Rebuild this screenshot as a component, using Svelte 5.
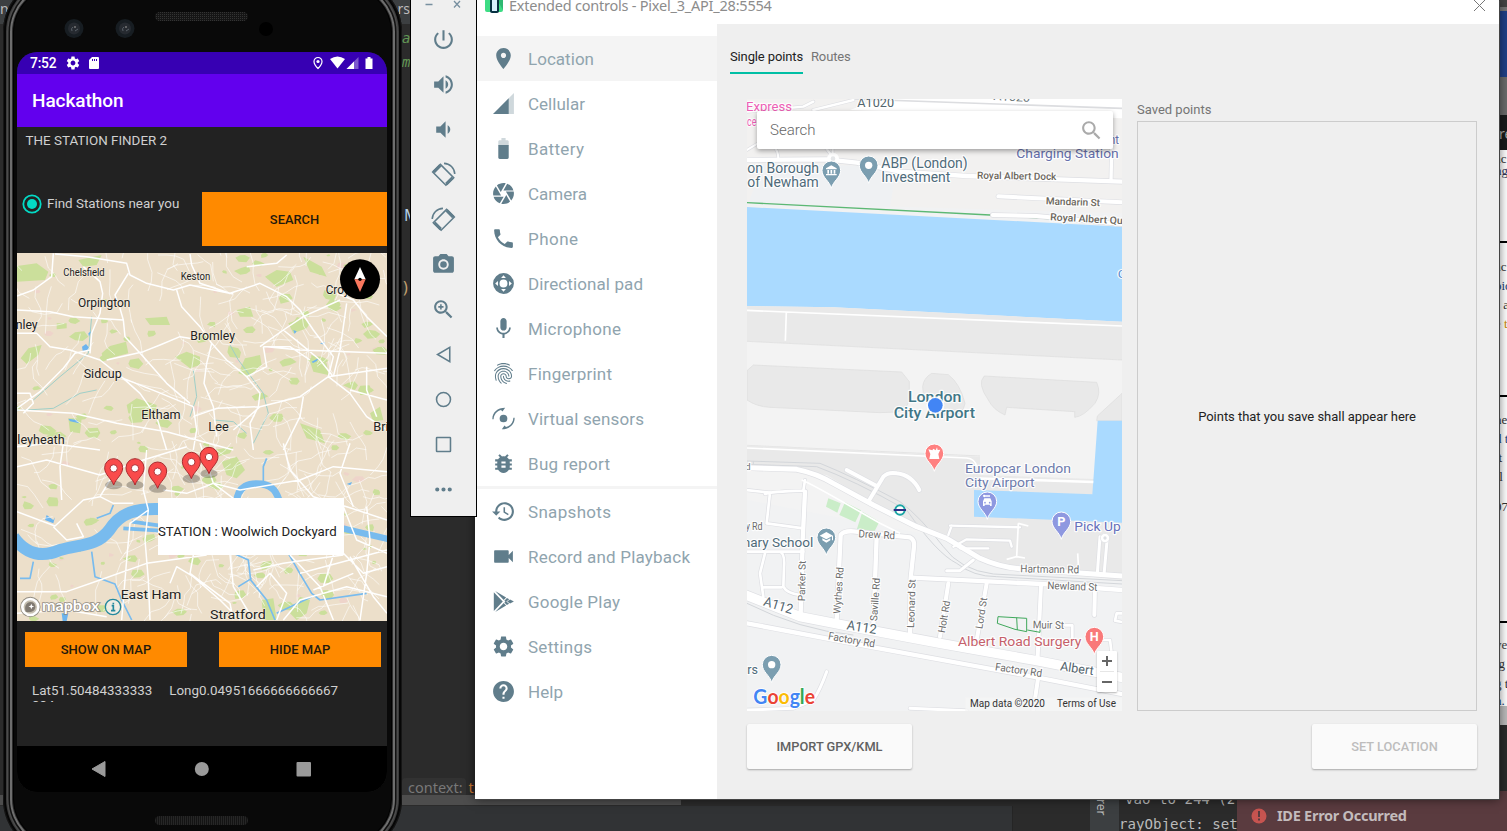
<script>
  const P = {
    pin: 'M12 2C8.13 2 5 5.13 5 9c0 5.25 7 13 7 13s7-7.75 7-13c0-3.87-3.13-7-7-7zm0 9.5c-1.38 0-2.5-1.12-2.5-2.5s1.12-2.5 2.5-2.5 2.5 1.12 2.5 2.5-1.12 2.5-2.5 2.5z',
    gear: 'M19.14 12.94c.04-.3.06-.61.06-.94 0-.32-.02-.64-.07-.94l2.03-1.58c.18-.14.23-.41.12-.61l-1.92-3.32c-.12-.22-.37-.29-.59-.22l-2.39.96c-.5-.38-1.03-.7-1.62-.94l-.36-2.54c-.04-.24-.24-.41-.48-.41h-3.84c-.24 0-.43.17-.47.41l-.36 2.54c-.59.24-1.13.57-1.62.94l-2.39-.96c-.22-.08-.47 0-.59.22L2.74 8.87c-.12.21-.08.47.12.61l2.03 1.58c-.05.3-.09.63-.09.94s.02.64.07.94l-2.03 1.58c-.18.14-.23.41-.12.61l1.92 3.32c.12.22.37.29.59.22l2.39-.96c.5.38 1.03.7 1.62.94l.36 2.54c.05.24.24.41.48.41h3.84c.24 0 .44-.17.47-.41l.36-2.54c.59-.24 1.13-.56 1.62-.94l2.39.96c.22.08.47 0 .59-.22l1.92-3.32c.12-.22.07-.47-.12-.61l-2.01-1.58zM12 15.6c-1.98 0-3.6-1.62-3.6-3.6s1.62-3.6 3.6-3.6 3.6 1.62 3.6 3.6-1.62 3.6-3.6 3.6z',
    search: 'M15.5 14h-.79l-.28-.27C15.41 12.59 16 11.11 16 9.5 16 5.91 13.09 3 9.5 3S3 5.91 3 9.5 5.91 16 9.5 16c1.61 0 3.09-.59 4.23-1.57l.27.28v.79l5 4.99L20.49 19l-4.99-5zm-6 0C7.01 14 5 11.99 5 9.5S7.01 5 9.5 5 14 7.01 14 9.5 11.99 14 9.5 14z'
  };

  const menu = [
    { label: 'Location', w: 66, paths: [[P.pin]] },
    { label: 'Cellular', w: 57, paths: [['M2 22h20V2z', 0.3], ['M17 7L2 22h15z']] },
    { label: 'Battery', w: 56, paths: [['M17 5.33C17 4.6 16.4 4 15.67 4H14V2h-4v2H8.33C7.6 4 7 4.6 7 5.33V9h10V5.33z', 0.3], ['M7 8.6v12.07C7 21.4 7.6 22 8.33 22h7.33c.74 0 1.34-.6 1.34-1.33V8.6H7z']] },
    { label: 'Camera', w: 59, paths: [['M9.4 10.5l4.77-8.26C13.47 2.09 12.75 2 12 2c-2.4 0-4.6.85-6.32 2.25l3.66 6.35.06-.1zM21.54 9c-.92-2.92-3.15-5.26-6-6.34L11.88 9h9.66zm.26 1h-7.49l.29.5 4.76 8.25C21 16.97 22 14.61 22 12c0-.69-.07-1.35-.2-2zM8.54 12l-3.9-6.75C3.01 7.03 2 9.39 2 12c0 .69.07 1.35.2 2h7.49l-1.15-2zm-6.08 3c.92 2.92 3.15 5.26 6 6.34L12.12 15H2.46zm11.27 0l-3.9 6.76c.7.15 1.42.24 2.17.24 2.4 0 4.6-.85 6.32-2.25l-3.66-6.35-.93 1.6z']] },
    { label: 'Phone', w: 50, paths: [['M6.62 10.79c1.44 2.83 3.76 5.14 6.59 6.59l2.2-2.2c.27-.27.67-.36 1.02-.24 1.12.37 2.33.57 3.57.57.55 0 1 .45 1 1V20c0 .55-.45 1-1 1-9.39 0-17-7.61-17-17 0-.55.45-1 1-1h3.5c.55 0 1 .45 1 1 0 1.25.2 2.45.57 3.57.11.35.03.74-.25 1.02l-2.2 2.2z']] },
    { label: 'Directional pad', w: 115, paths: [['M12 2a10 10 0 1 0 0 20 10 10 0 0 0 0-20zm0 6.2a3.8 3.8 0 1 1 0 7.6 3.8 3.8 0 0 1 0-7.6zM12 4l2.3 2.7H9.7zM12 20l-2.3-2.7h4.6zM4 12l2.7-2.3v4.6zM20 12l-2.7 2.3V9.700z']] },
    { label: 'Microphone', w: 93, paths: [['M12 14c1.66 0 2.99-1.34 2.99-3L15 5c0-1.66-1.34-3-3-3S9 3.34 9 5v6c0 1.66 1.34 3 3 3zm5.3-3c0 3-2.54 5.1-5.3 5.1S6.7 14 6.7 11H5c0 3.41 2.72 6.23 6 6.72V21h2v-3.28c3.28-.48 6-3.3 6-6.72h-1.7z']] },
    { label: 'Fingerprint', w: 84, paths: [['M17.81 4.47c-.08 0-.16-.02-.23-.06C15.66 3.42 14 3 12.01 3c-1.98 0-3.86.47-5.57 1.41-.24.13-.54.04-.68-.2-.13-.24-.04-.55.2-.68C7.82 2.52 9.86 2 12.01 2c2.13 0 3.99.47 6.03 1.52.25.13.34.43.21.67-.09.18-.26.28-.44.28zM3.5 9.72c-.1 0-.2-.03-.29-.09-.23-.16-.28-.47-.12-.7.99-1.4 2.25-2.5 3.75-3.27C9.98 4.04 14 4.03 17.15 5.65c1.5.77 2.76 1.86 3.75 3.25.16.22.11.54-.12.7-.23.16-.54.11-.7-.12-.9-1.26-2.04-2.25-3.39-2.94-2.87-1.47-6.54-1.47-9.4.01-1.36.7-2.5 1.7-3.4 2.96-.08.14-.23.21-.39.21zm6.25 12.07c-.13 0-.26-.05-.35-.15-.87-.87-1.34-1.43-2.01-2.64-.69-1.23-1.05-2.73-1.05-4.34 0-2.97 2.54-5.39 5.66-5.39s5.66 2.42 5.66 5.39c0 .28-.22.5-.5.5s-.5-.22-.5-.5c0-2.42-2.09-4.39-4.66-4.39-2.57 0-4.66 1.97-4.66 4.39 0 1.44.32 2.77.93 3.85.64 1.15 1.08 1.64 1.85 2.42.19.2.19.51 0 .71-.11.1-.24.15-.37.15zm7.17-1.85c-1.19 0-2.24-.3-3.1-.89-1.49-1.01-2.38-2.65-2.38-4.39 0-.28.22-.5.5-.5s.5.22.5.5c0 1.41.72 2.74 1.94 3.56.71.48 1.54.71 2.54.71.24 0 .64-.03 1.04-.1.27-.05.53.13.58.41.05.27-.13.53-.41.58-.57.11-1.07.12-1.21.12zM14.91 22c-.04 0-.09-.01-.13-.02-1.59-.44-2.63-1.03-3.72-2.1-1.4-1.39-2.17-3.24-2.17-5.22 0-1.62 1.38-2.94 3.08-2.94 1.7 0 3.08 1.32 3.08 2.94 0 1.07.93 1.94 2.08 1.94s2.08-.87 2.08-1.94c0-3.77-3.25-6.83-7.25-6.83-2.84 0-5.44 1.58-6.61 4.03-.39.81-.59 1.76-.59 2.8 0 .78.07 2.01.67 3.61.1.26-.03.55-.29.64-.26.1-.55-.04-.64-.29-.49-1.31-.73-2.61-.73-3.96 0-1.2.23-2.29.68-3.24 1.33-2.79 4.28-4.6 7.51-4.6 4.55 0 8.25 3.51 8.25 7.83 0 1.62-1.38 2.94-3.08 2.94s-3.08-1.32-3.08-2.94c0-1.07-.93-1.94-2.08-1.94s-2.08.87-2.08 1.94c0 1.71.66 3.31 1.87 4.51.95.94 1.86 1.46 3.27 1.85.27.07.42.35.35.61-.05.23-.26.38-.47.38z']] },
    { label: 'Virtual sensors', w: 116, paths: [['M12 8.300a3.700 3.700 0 1 0 0 7.400 3.700 3.700 0 0 0 0-7.400zM1.300 12.800C1.100 6.500 6 1.700 13.600 1.700L11 5.300 9.600 3.800C5.500 5 2.700 8.200 2.500 12.800zM22.700 11.200c.2 6.300-4.700 11.100-12.300 11.100l2.600-3.600 1.400 1.500c4.100-1.200 6.900-4.400 7.100-9z']] },
    { label: 'Bug report', w: 82, paths: [['M20 8h-2.81c-.45-.78-1.07-1.45-1.82-1.96L17 4.41 15.59 3l-2.17 2.17C12.96 5.06 12.49 5 12 5c-.49 0-.96.06-1.41.17L8.41 3 7 4.41l1.62 1.63C7.88 6.55 7.26 7.22 6.81 8H4v2h2.09c-.05.33-.09.66-.09 1v1H4v2h2v1c0 .34.04.67.09 1H4v2h2.81c1.04 1.79 2.97 3 5.19 3s4.15-1.21 5.19-3H20v-2h-2.09c.05-.33.09-.66.09-1v-1h2v-2h-2v-1c0-.34-.04-.67-.09-1H20V8zm-6 8h-4v-2h4v2zm0-4h-4v-2h4v2z']] },
    { label: 'Snapshots', w: 83, split: true, paths: [['M13 3c-4.97 0-9 4.03-9 9H1l3.89 3.89.07.14L9 12H6c0-3.87 3.13-7 7-7s7 3.13 7 7-3.13 7-7 7c-1.93 0-3.68-.79-4.94-2.06l-1.42 1.42C8.27 19.99 10.51 21 13 21c4.97 0 9-4.03 9-9s-4.03-9-9-9zm-1 5v5l4.28 2.54.72-1.21-3.5-2.08V8H12z']] },
    { label: 'Record and Playback', w: 162, paths: [['M17 10.5V7c0-.55-.45-1-1-1H4c-.55 0-1 .45-1 1v10c0 .55.45 1 1 1h12c.55 0 1-.45 1-1v-3.5l4 4v-11l-4 4z']] },
    { label: 'Google Play', w: 92, paths: [['M2.700 3v18l8.600-9zM4 1.900l8.200 8.700 2.300-2.500zM4 22.100l8.200-8.700 2.300 2.500zM15.300 8.600L12.800 11.300l1.400 1.200 3.300-2.600zM12.800 12.900l2.400 2.500 2.200-1.200-3-2.500zM18.300 10.100l-2.800 1.900 2.800 1.900 3.700-1.900z']] },
    { label: 'Settings', w: 64, paths: [[P.gear]] },
    { label: 'Help', w: 35, paths: [['M12 2C6.48 2 2 6.48 2 12s4.48 10 10 10 10-4.480 10-10S17.520 2 12 2zm1 17h-2v-2h2v2zm2.070-7.750l-.9.920C13.450 12.900 13 13.500 13 15h-2v-.5c0-1.100.45-2.100 1.170-2.830l1.240-1.260c.37-.36.59-.86.59-1.410 0-1.100-.9-2-2-2s-2 .9-2 2H8c0-2.210 1.790-4 4-4s4 1.790 4 4c0 .88-.36 1.680-.93 2.250z']] }
  ];

  const tools = [
    { f: 'M13 3h-2v10h2V3zm4.830 2.170l-1.420 1.420C17.990 7.860 19 9.810 19 12c0 3.870-3.130 7-7 7s-7-3.130-7-7c0-2.190 1.010-4.140 2.580-5.420L6.170 5.170C4.230 6.820 3 9.260 3 12c0 4.970 4.030 9 9 9s9-4.030 9-9c0-2.740-1.230-5.180-3.170-6.830z' },
    { f: 'M3 9v6h4l5 5V4L7 9H3zm13.5 3c0-1.77-1.02-3.29-2.5-4.03v8.05c1.48-.73 2.5-2.25 2.5-4.02zM14 3.23v2.06c2.89.86 5 3.54 5 6.71s-2.11 5.85-5 6.71v2.06c4.01-.91 7-4.49 7-8.77s-2.99-7.86-7-8.77z' },
    { f: 'M18.500 12c0-1.770-1.020-3.290-2.500-4.030v8.050c1.480-.73 2.500-2.250 2.500-4.020zM5 9v6h4l5 5V4L9 9H5z' },
    { s: 'M9 2.300L21.800 15.100 14.300 22.300 1.600 9.700zM12.500 1.300A10.500 10.500 0 0 1 22.800 11.500', b: 'M2.600 9.700L9 3.300M14.600 21.300L20.800 15.100' },
    { s: 'M15 2.300L2.200 15.100 9.700 22.300 22.400 9.700zM11.500 1.300A10.500 10.500 0 0 0 1.200 11.500', b: 'M21.400 9.700L15 3.300M9.400 21.300L3.200 15.100' },
    { f: 'M12 8.800a3.200 3.200 0 1 0 0 6.400 3.200 3.200 0 0 0 0-6.400zM9 2L7.170 4H4c-1.100 0-2 .9-2 2v12c0 1.100.9 2 2 2h16c1.100 0 2-.9 2-2V6c0-1.100-.9-2-2-2h-3.170L15 2H9zm3 15c-2.760 0-5-2.240-5-5s2.240-5 5-5 5 2.240 5 5-2.240 5-5 5z' },
    { f: P.search, s: 'M9.500 7v5M7 9.500h5' },
    { s: 'M18 5.200v13.600L6.300 12z' },
    { s: 'M12 5.300a6.700 6.700 0 1 0 0 13.400 6.700 6.700 0 0 0 0-13.400z' },
    { s: 'M5.800 5.300h12.400a.5.5 0 0 1 .5.5v12.400a.5.5 0 0 1-.5.5H5.800a.5.5 0 0 1-.5-.5V5.800a.5.5 0 0 1 .5-.5z' },
    { f: 'M6 10a2 2 0 1 0 0 4 2 2 0 0 0 0-4zM12 10a2 2 0 1 0 0 4 2 2 0 0 0 0-4zM18 10a2 2 0 1 0 0 4 2 2 0 0 0 0-4z' }
  ];

  let seed = 20;
  const rnd = () => (seed = (seed * 16807) % 2147483647) / 2147483647;
  const lanes = Array.from({ length: 330 }, (_, i) => {
    let x = 51 + rnd() * 1110;
    let y = 759 + rnd() * 1100;
    if (i > 200) x = 500 + rnd() * 660;
    let a = rnd() * 6.3;
    let d = `M${x.toFixed(0)} ${y.toFixed(0)}`;
    for (let k = 0; k < 4; k++) {
      a += (rnd() - 0.5) * 1.3;
      x += Math.cos(a) * (16 + rnd() * 26);
      y += Math.sin(a) * (16 + rnd() * 26);
      d += `L${x.toFixed(0)} ${y.toFixed(0)}`;
    }
    return d;
  }).join('');
  const blobs = (n, max) =>
    Array.from({ length: n }, () => {
      const x = 51 + rnd() * 1110;
      const y = 759 + rnd() * 1100;
      const r = 4 + rnd() * max;
      const pts = [];
      for (let k = 0; k < 6; k++) {
        const q = r * (0.6 + rnd() * 0.7);
        pts.push(`${(x + Math.cos(k * 1.05) * q * 1.3).toFixed(0)} ${(y + Math.sin(k * 1.05) * q * 0.8).toFixed(0)}`);
      }
      return 'M' + pts.join('L') + 'z';
    }).join('');
  const greens = blobs(120, 17);
  const pinks = blobs(30, 9);

  const upperRoads = 'M160 10L155 80 100 120 51 138M165 12L260 20 380 40 390 75 440 100 520 120 570 105 640 120 700 132M250 50L300 95 308 130 300 190 275 250 270 310M51 250L110 250 150 290 210 300 300 330 370 385 470 425 580 470M51 475L120 425 190 355 225 310 270 300M385 70L345 135 360 175 370 210 375 260 430 320 500 400 570 460M320 330L430 305 480 285 540 260 600 270M51 180L150 185 220 200 370 210M530 120L545 170 600 230 635 280 680 330 740 380 800 350 790 290M635 280L620 340 612 400 640 470 650 560M740 50L830 40 860 15M570 12L575 45 600 100 690 130 780 100 860 140 900 180 940 240 1000 320 985 380 1050 430 1100 500 1161 540M1161 260L1100 200 1060 150 1010 130M780 290L850 240 910 200 1020 150M850 240L900 280 960 330 1000 380M740 380L780 430 775 470 750 520 760 600M51 480L220 490 350 520 500 545 700 600M580 500L650 475 780 470 900 440 985 380 1161 355M1040 160L1020 300 1000 380M790 290L870 290 930 330M370 385L420 430 470 500 500 600M51 590L150 580 300 600M580 470L590 540 580 600M1100 350L1100 420 1130 500M800 290L900 300 1161 310M850 600L900 500 910 440M700 540L780 470M1050 420L1161 450M51 430L90 430 100 460 70 490';
  const lowerRoads = 'M51 80L140 60 300 105 430 60 560 20M51 215L165 258 250 180 300 170M440 30L430 150 445 210M600 10L640 130 700 175M445 210L390 250 380 360 365 540M445 210L435 300 445 420 450 540M51 455L200 455 300 420 440 370 620 345M490 150L560 160 640 130M640 130L720 150 900 120 1000 80 1161 95M850 10L870 90 940 170 1040 200 1161 240M1050 10L1020 100 1060 200M510 430L530 380 580 410 660 480 720 540M580 345L570 400 690 490 700 540M690 345L700 440 760 540M760 390L850 370 1030 345M850 540L900 480 1040 440 1161 470M1030 340L1090 400 1161 380M870 345L960 440 1000 540M1030 200L1070 300 1161 340M1050 350L1120 470 1161 520M1000 345L970 440M1100 200L1110 300 1100 400 1080 540M900 400L1161 330M190 10L180 80 185 180M330 120L300 170 340 190 400 190M160 260L200 300 250 290 230 250M51 520L200 510 320 530M940 450L1060 400M770 440L810 400 860 460 830 540';

  const cityLabels = [
    ['Chelsfield', 190, 827, 124, 31], ['Keston', 542, 840, 89, 31], ['Orpington', 234, 921, 157, 39], ['nley', 47, 987, 66, 39],
    ['Croydon', 977, 882, 130, 37], ['Bromley', 571, 1020, 134, 39], ['Sidcup', 251, 1133, 114, 39], ['Eltham', 424, 1258, 118, 39],
    ['Lee', 625, 1292, 61, 39], ['leyheath', 52, 1331, 142, 39], ['Brixton', 1120, 1293, 120, 39], ['East Ham', 362, 1797, 182, 41], ['Stratford', 630, 1857, 167, 41]
  ];
  const markers = [[341, 1455], [405, 1455], [473, 1465], [574, 1436], [627, 1421]];

  const streets = [
    ['M2241 335L2410 320 2440 305M2440 330L2560 300M2460 420L2490 460 2500 480', 7],
    ['M2241 480L2480 478 2570 488 2700 515 2900 528 3366 545', 13],
    ['M2241 450L2340 390 2420 350M2320 440Q2335 450 2335 478M2498 400L2498 470', 6],
    ['M3336 410L3333 540', 10], ['M2995 589L3366 607M2978 645L3110 648 3366 672', 12],
    ['M2240 1470L2310 1478 2300 1570 2410 1585M2295 1482Q2310 1475 2410 1472L2415 1440M2410 1655L2340 1655M2241 1655L2340 1655Q2355 1660 2352 1700L2350 1760Q2360 1780 2400 1785M2295 1660L2280 1720 2290 1790M2290 1762L2345 1762', 8],
    ['M2415 1475L2408 1620 2402 1840', 13], ['M2510 1860L2522 1605Q2530 1592 2560 1594L2730 1612Q2745 1620 2742 1640L2732 1735 2730 1910M2630 1610L2620 1880', 13],
    ['M2735 1733L3125 1752 3366 1770', 13], ['M2845 1750L2820 1910M2960 1750L2930 1920M3123 1755L3113 1970M3285 1760L3283 1845M3115 2030L3100 2130', 12],
    ['M2850 1577L3060 1582M2845 1605L2855 1577M2860 1640L2900 1618 3030 1622 3035 1640M2965 1645L2880 1645', 7],
    ['M3300 1610L3292 1720M3322 1612L3312 1725', 9], ['M2840 1712L2880 1712 2920 1680', 9],
    ['M2480 2015Q2460 2070 2440 2100L2380 2125 2241 2130M2730 2125L2900 2132', 9],
    ['M3366 1840L3350 1840 3345 1862 3366 1866M3195 1876L3217 1876 3217 1920M3290 1920L3330 1920 3335 1960', 8]
  ];
  const arteries = [
    ['M2241 1403L2390 1408Q2450 1420 2500 1450L2620 1515 2750 1580 2840 1615 2940 1675Q3000 1702 3060 1706L3366 1728', 15],
    ['M2608 1500L2650 1430Q2665 1415 2690 1420Q2735 1425 2758 1470M2540 1410L2630 1458', 12],
    ['M2225 1780L2400 1850 2580 1885 2820 1930 3110 1982 3380 2035', 28],
    ['M2241 1870L2620 1942 3100 2030 3380 2085', 13]
  ];

  const g = (t, x, y, w, s, c, r = 0, b = 400) => ({ t, x, y, w, s, c, r, b });
  const mapLabels = [
    g('Express', 2238, 334, 138, 38, '#ed5fb5'), g('ce', 2241, 377, 28, 38, '#ed5fb5'), g('A1020', 2572, 320, 110, 37, '#53656e'), g('A1020', 2980, 300, 110, 35, '#6d777c', 3),
    g('nt', 3327, 432, 30, 38, '#6670ab'), g('Charging Station', 3049, 474, 307, 39, '#6670ab'),
    g('on Borough', 2242, 519, 215, 42, '#4f6b7a'), g('of Newham', 2242, 561, 214, 42, '#4f6b7a'),
    g('ABP (London)', 2644, 504, 259, 42, '#4f6b7a'), g('Investment', 2644, 546, 207, 42, '#4f6b7a'),
    g('Royal Albert Dock', 2931, 536, 238, 30, '#6b665c', 1, 500), g('Mandarin St', 3137, 613, 163, 30, '#6b665c', 2, 500), g('Royal Albert Quay', 3150, 661, 250, 30, '#6b665c', 3, 500),
    g('C', 3353, 834, 26, 34, '#5a8fd0'),
    g('London', 2724, 1207, 160, 46, '#417787', 0, 500), g('City Airport', 2681, 1255, 244, 46, '#417787', 0, 500),
    g('d', 2236, 1410, 16, 28, '#707070'), g('Europcar London', 2895, 1419, 318, 41, '#6d7bac'), g('City Airport', 2895, 1461, 209, 41, '#6d7bac'),
    g('Pick Up', 3223, 1592, 139, 39, '#6670bb'), g('y Rd', 2237, 1590, 51, 30, '#6c6c6c'), g('nary School', 2228, 1640, 212, 41, '#4f6b7a'),
    g('Drew Rd', 2575, 1612, 110, 32, '#6c6c6c', 3), g('Parker St', 2415, 1804, 122, 30, '#6c6c6c', -89), g('Wythes Rd', 2521, 1842, 140, 30, '#6c6c6c', -86),
    g('Saville Rd', 2631, 1864, 130, 30, '#6c6c6c', -86), g('Leonard St', 2742, 1884, 146, 30, '#6c6c6c', -88), g('Holt Rd', 2834, 1900, 98, 30, '#6c6c6c', -80), g('Lord St', 2947, 1888, 95, 30, '#6c6c6c', -81),
    g('Hartmann Rd', 3061, 1717, 176, 32, '#6c6c6c', 1), g('Newland St', 3142, 1767, 150, 32, '#6c6c6c', 2),
    g('A112', 2288, 1816, 90, 40, '#53656e', 17), g('A112', 2539, 1888, 90, 40, '#53656e', 9), g('Factory Rd', 2483, 1918, 142, 32, '#6c6c6c', 10), g('Factory Rd', 2984, 2011, 142, 32, '#6c6c6c', 8),
    g('Muir St', 3098, 1885, 94, 32, '#6c6c6c', 1), g('Albert Road Surgery', 2874, 1938, 370, 41, '#c5606a'), g('Albert', 3179, 2011, 101, 38, '#53656e', 8), g('rs', 2242, 2021, 32, 41, '#4f6b7a')
  ];
  const poi = [
    [2494, 511, '#7b9eb0', 'bank'], [2606, 496, '#7b9eb0', 'dot'], [2803, 1360, '#ff8080', 'star'], [2962, 1504, '#8e98e0', 'car'],
    [3184, 1564, '#8e98e0', 'P'], [2479, 1612, '#7b9eb0', 'cap'], [3283, 1910, '#f97979', 'H'], [2315, 1994, '#7b9eb0', 'dot']
  ];
  const scraps = [
    ['ac', 151, '#333'], ['ng', 163, '#335'], ['ac', 259, '#333'], ['oid', 278, '#247'], ['s a', 297, '#333'], ['e t', 316, '#c80'],
    ['ne', 412, '#333'], ['d t', 431, '#247'], ['lt', 450, '#333'], ['rl', 469, '#333'], ['07', 499, '#333'], [')', 560, '#965'],
    ['ve', 637, '#444'], ['ig', 656, '#333'], ['g t', 676, '#333'], ['h.', 693, '#247']
  ];
</script>

<main>
  <div class="ide">
    <div class="tabstrip"><span>n(</span><span>ors</span></div>
    <div class="code"><i style="top:30px">a</i><i style="top:54px">m</i><b>M</b><em>)</em></div>
    <div class="hint"><span>context:</span><u>t</u></div>
    <div class="hscroll"></div>
    <div class="foot">
      <div class="panel"></div>
      <div class="vtab"><span>rer</span></div>
      <div class="log"><span>vao to 244 (2</span><span>rayObject: set</span></div>
    </div>
  </div>
  <div class="edge">
    {#each scraps as [t, y, c]}<span style="top:{y}px;color:{c}">{t}</span>{/each}
    <strong>re</strong>
  </div>
  <div class="alert">
    <svg width="16" height="16" viewBox="0 0 16 16"><circle cx="8" cy="8" r="7.500" fill="#c75450" /><path d="M7 3h2v6H7zM7 10.500h2v2H7z" fill="#5a3b3f" /></svg>
    <span>IDE Error Occurred</span>
  </div>

  <section class="phone">
    <svg class="bezel" width="399" height="75" viewBox="3 -23 399 75">
      <defs><pattern id="mesh" width="2" height="2" patternUnits="userSpaceOnUse"><rect width="2" height="2" fill="#151515" /><rect width="1" height="1" fill="#333" /></pattern></defs>
      {#each [74, 125] as x}
        <circle cx={x} cy="28.500" r="9.500" fill="#171d22" /><circle cx={x} cy="28.500" r="6" fill="#262a30" /><path d="M{x - 2} 31a3 3 0 0 1 1-4M{x + 1} 31l3-2" stroke="#596068" fill="none" /><circle cx={x + 1} cy="27" r="1" fill="#777" />
      {/each}
      <rect x="155" y="12" width="93" height="9" rx="4.500" fill="url(#mesh)" />
      <circle cx="266" cy="29" r="7" fill="#000" />
    </svg>
    <div class="screen">
      <div class="status">
        <b>7:52</b>
        <svg width="14" height="14" viewBox="1.500 1.500 21 21"><path d={P.gear} fill="#fff" /></svg>
        <svg class="sd" width="10" height="12" viewBox="0 0 10 12"><path d="M3 0h6a1 1 0 0 1 1 1v10a1 1 0 0 1-1 1H1a1 1 0 0 1-1-1V3z" fill="#fff" /><path d="M3.500 2v2M5.500 2v2M7.500 2v2" stroke="#3700b3" /></svg>
        <svg class="right" width="69" height="14" viewBox="0 0 69 14">
          <path d="M9 1.500a4 4 0 0 0-4 4c0 3 4 7 4 7s4-4 4-7a4 4 0 0 0-4-4z" fill="none" stroke="#fff" stroke-width="1.200" /><circle cx="9" cy="5.500" r="1.600" fill="#fff" />
          <path d="M21 3q7.500-5 15 0l-7.500 9.500z" fill="#fff" /><path d="M37.500 13h12V1z" fill="#fff" opacity=".35" /><path d="M37.500 13h7.500V5.500z" fill="#fff" />
          <path d="M56.500 2.500h2V1h3v1.500h2V13h-7z" fill="#fff" />
        </svg>
      </div>
      <header>Hackathon</header>
      <div class="app">
        <p class="title">THE STATION FINDER 2</p>
        <div class="finder">
          <svg width="20" height="20" viewBox="0 0 20 20"><circle cx="10" cy="10" r="8.700" fill="none" stroke="#03dac5" stroke-width="1.800" /><circle cx="10" cy="10" r="5" fill="#03dac5" /></svg>
          <span>Find Stations near you</span>
          <button>SEARCH</button>
        </div>
        <svg class="citymap" width="370" height="368" viewBox="51 759 1110 1104">
          <rect x="51" y="759" width="1110" height="1104" fill="#ecdfca" />
          <path d={pinks} fill="#f0cfca" opacity=".7" />
          <path d={greens} fill="#cbdf9b" />
          <path fill="#cbdf9b" d="M51 798L110 790 145 815 135 840 51 845zM235 780L305 765 290 795 250 800zM62 1075L85 1045 125 1035 115 1065 80 1092zM305 1060L330 1038 378 1025 385 1060 310 1080zM525 1070L560 1055 600 1070 600 1095 570 1105zM715 1120L735 1075 780 1065 785 1095 745 1130zM795 830L830 810 870 815 880 840 830 860zM910 770L965 800 980 830 930 815zM865 970L905 955 920 985 880 1000zM380 1215L410 1195 470 1215 465 1255 385 1240zM900 1270L960 1290 975 1330 920 1315zM435 955L500 950 510 975 450 975zM1030 795L1060 785 1075 830 1050 825zM665 1385L710 1370 735 1410 710 1435 680 1425zM870 1840L900 1790 930 1800 920 1840 890 1860zM785 1800L820 1795 830 1860 790 1860zM640 1350L700 1340 690 1360 650 1370zM205 1255L245 1255 240 1300 210 1295zM930 1085L980 1090 985 1125 940 1115zM710 930L750 920 760 950 720 950zM1110 1240L1140 1220 1150 1260 1120 1265zM170 970L200 970 200 985 170 988z" />
          <path d="M51 1232L160 1225 240 1180 290 1170M275 950L265 1060 180 1130 100 1200M690 1035L715 1080 790 1180 805 1240 760 1330M580 1110L590 1190 570 1250M640 1260L700 1265 740 1300" fill="none" stroke="#9fcfc8" stroke-width="3" />
          <path d="M246 1040l12-8 8 10-4 12-14-2zM205 1256l25 4 8 10-28-6zM960 1030l14-4-2 8zM935 1085l20-10-4 8-12 6zM265 1000l8-6-6 16zM880 990l10 4-6 8zM140 1545l20 15 5-8-5 18-25-10zM1040 1452l16-6-4 10zM185 1840h20l-5 23h-12z" fill="#6cb4ee" />
          <path d={lanes} fill="none" stroke="#fff" stroke-width="2.200" opacity=".8" stroke-linejoin="round" />
          <g fill="none" stroke="#78bbee" stroke-linejoin="round">
            <path d="M40 1610C80 1668 130 1672 180 1650C240 1632 290 1640 328 1590C360 1538 410 1524 482 1527" stroke-width="36" />
            <path d="M709 1510C712 1455 750 1448 785 1452C820 1458 830 1475 840 1510" stroke-width="21" />
            <path d="M1028 1585Q1090 1600 1165 1617" stroke-width="19" />
            <path d="M370 1585L480 1592M395 1565L480 1577" stroke-width="11" />
            <path d="M275 1655L285 1730 345 1752 365 1800 395 1860M700 1660L745 1680 752 1740 800 1800 825 1860M755 1735L715 1760M790 1450L790 1400 800 1375M865 1660L905 1730 935 1780 960 1800 1100 1780M935 1790L830 1840M290 1555L330 1540 340 1515M100 1685L90 1735 60 1735" stroke-width="5" />
          </g>
          <g fill="none" stroke="#fff" stroke-width="4.500" stroke-linejoin="round"><path d={upperRoads} transform="translate(0 750)" /><path d={lowerRoads} transform="translate(0 1320)" /></g>
          {#each cityLabels as [t, x, y, w, s]}
            <text {x} {y} textLength={w} lengthAdjust="spacingAndGlyphs" font-size={s} fill="#222" class="halo cream">{t}</text>
          {/each}
          {#each markers as [x, y]}
            <ellipse cx={x} cy={y} rx="26" ry="13" fill="#000" opacity=".25" />
            <path d="M{x} {y}C{x - 8} {y - 22} {x - 27} {y - 30} {x - 27} {y - 52}a27 27 0 0 1 54 0C{x + 27} {y - 30} {x + 8} {y - 22} {x} {y}z" fill="#f94b4b" stroke="#a92a2f" stroke-width="3" />
            <circle cx={x} cy={y - 50} r="11" fill="#fff" stroke="#b43236" stroke-width="3" />
          {/each}
          <circle cx="1080" cy="838" r="60" fill="#000" />
          <path d="M1080 801L1097 838H1063z" fill="#fff" /><path d="M1080 876L1097 838H1063z" fill="#f9775e" /><circle cx="1080" cy="838" r="5" fill="#000" />
          <rect x="474" y="1494" width="558" height="171" fill="#fff" />
          <text x="474" y="1607" textLength="536" lengthAdjust="spacingAndGlyphs" font-size="40" fill="#222">STATION : Woolwich Dockyard</text>
          <circle cx="91" cy="1821" r="26" fill="#c5bfb0" stroke="#918c82" stroke-width="9" /><circle cx="91" cy="1821" r="24" fill="none" stroke="#fff" stroke-width="8" />
          <path d="M77 1835c-5-16 2-29 15-29 8 0 14 6 14 14 0 13-13 19-29 15z" fill="#807a72" /><path d="M94 1811l2.500 6 6 2.500-6 2.500-2.500 6-2.500-6-6-2.500 6-2.500z" fill="#fff" />
          <text x="126" y="1832" textLength="172" lengthAdjust="spacingAndGlyphs" font-size="47" font-weight="700" class="mapbox">mapbox</text>
          <circle cx="339" cy="1821" r="23" fill="#efefe8" fill-opacity=".8" stroke="#24899e" stroke-width="4" /><path d="M340 1808v5M335 1817h5v15M333 1832h13" stroke="#24899e" stroke-width="5" fill="none" />
        </svg>
        <div class="pair"><button>SHOW ON MAP</button><button>HIDE MAP</button></div>
        <div class="coords"><div>Lat51.50484333333<br />334</div><div>Long0.04951666666666667</div></div>
      </div>
      <nav>
        <svg width="370" height="46" viewBox="17 746 370 46"><path d="M92 769L105 761.500V776.500z" fill="#9a9a9a" stroke="#9a9a9a" stroke-linejoin="round" /><circle cx="201.800" cy="769" r="7" fill="#9a9a9a" /><rect x="296.500" y="762" width="14.500" height="14.500" rx="1" fill="#9a9a9a" /></svg>
      </nav>
    </div>
    <div class="speaker"></div>
  </section>

  <section class="window">
    <div class="caption">
      <svg width="19" height="18" viewBox="0 0 19 18"><rect width="18" height="14" y="-2" rx="2" fill="#3ddc84" /><path d="M11-2h7v12z" fill="#2eb872" /><rect x="6" y="-2" width="7" height="14" rx="1" fill="#d7effe" stroke="#083042" stroke-width="2" /></svg>
      <span>Extended controls - Pixel_3_API_28:5554</span>
      <svg class="close" width="13" height="13" viewBox="0 0 13 13"><path d="M1 0L12 11M12 0L1 11" stroke="#777" fill="none" /></svg>
    </div>
    <div class="body">
      <aside>
        {#each menu as item, i}
          <div class="item" class:on={i === 0} class:split={item.split}>
            <svg width="25" height="25" viewBox="0 0 24 24">{#each item.paths as [d, o]}<path {d} fill="#607d8b" fill-rule={item.label === 'Directional pad' ? 'evenodd' : 'nonzero'} opacity={o ?? 1} />{/each}</svg>
            <svg class="lbl" width="190" height="26"><text x="0" y="19" textLength={item.w} lengthAdjust="spacing" font-size="17">{item.label}</text></svg>
          </div>
        {/each}
      </aside>
      <div class="content">
        <div class="tabs"><span class="on">Single points</span><span>Routes</span></div>
        <div class="cols">
          <div class="mapbox-area">
            <svg class="gmap" width="375" height="612" viewBox="2241 297 1125 1836">
              <rect x="2241" y="297" width="1125" height="1836" fill="#f1f2f3" />
              <path d="M2241 297H3366V640L2241 607z" fill="#f2f1f0" /><path d="M2290 490L2241 620 2670 620 2690 500z" fill="#eff1f3" />
              <path d="M2550 330L3366 355V297H2640z" fill="#fff" /><path d="M2560 297L3366 325" stroke="#dcdde0" stroke-width="5" />
              <path d="M2241 608L2970 645 3366 670" stroke="#5cb874" stroke-width="4" fill="none" />
              <path d="M2241 621L3366 680V965L2500 922 2241 918z" fill="#aadaff" />
              <path d="M2241 918L2500 922 3366 965V1080L2241 1024z" fill="#e9e9e9" />
              <path d="M2241 1024L3366 1080V1440L3290 1700 2241 1500z" fill="#f3f3f3" />
              <path d="M2241 1024L3366 1080M2241 1336L2940 1368" stroke="#dcdcdc" stroke-width="2" />
              <path d="M2241 1336L2940 1370V1425L3366 1440V1740L3080 1710Q2980 1700 2920 1660L2780 1590 2620 1510 2480 1425 2241 1400z" fill="#e9e9e9" />
              <g fill="#e9e9e9" stroke="#dcdcdc" stroke-width="2"><path d="M2241 1112L2260 1095 2705 1116 2728 1145V1200Q2720 1230 2690 1236L2640 1238 2310 1222Q2270 1220 2241 1200zM2795 1120L2845 1124Q2880 1150 2895 1210 2890 1245 2850 1248 2770 1240 2768 1160 2770 1135 2795 1120zM2953 1128L3290 1147Q3305 1180 3285 1210 3250 1250 3224 1252V1235L3020 1222 3015 1245Q2980 1230 2965 1200 2930 1150 2953 1128zM3366 1180L3292 1248 3290 1262H3366z" /></g>
              <path d="M2241 931L3366 978M2359 935L2356 1022M2241 1344L2900 1374Q2925 1376 2930 1400" stroke="#fff" stroke-width="5" fill="none" />
              <path d="M3293 1262H3366V1568L2922 1550V1470L3277 1483z" fill="#aadaff" /><path d="M2940 1435L3280 1446" stroke="#fff" stroke-width="7" />
              <path d="M2485 1495l37 15-10 28-34-18zM2535 1507l48 24-17 36-48-22zM2587 1535l51 30-14 28h-55z" fill="#caedc8" />
              <path d="M2241 1383L2460 1390Q2560 1430 2700 1505 2760 1550 2830 1640 2880 1710 2980 1722L3366 1742M2260 1383V1393M2241 1393L2450 1400Q2560 1440 2720 1530 2810 1660 2870 1690 2920 1730 2990 1730L3366 1752M2241 1810Q2400 1890 2560 1905" stroke="#d3d6da" stroke-width="3" fill="none" />
              {#each [...streets, ...arteries] as [d, w]}<path {d} stroke="#dedfe3" stroke-width={w + 4} class="rd" />{/each}
              {#each [...streets, ...arteries] as [d, w]}<path {d} stroke="#fff" stroke-width={w} class="rd" />{/each}
              <circle cx="2499" cy="476" r="18" fill="#fff" /><circle cx="2499" cy="476" r="7" fill="#e5e7e9" />
              <circle cx="3315" cy="1614" r="14" fill="#fff" stroke="#dedfe3" stroke-width="2" /><circle cx="3315" cy="1614" r="5" fill="#dedfe3" />
              <path d="M3055 1570L3050 1670 3020 1678M3055 1570L3085 1578M3050 1670L3075 1674M3233 1660L3235 1694M2405 1440Q2430 1448 2640 1570L2700 1600" stroke="#fff" stroke-width="5" fill="none" />
              <path d="M2994 1850L3080 1855V1895L3045 1888 2992 1870zM3050 1853L3052 1890M3082 1890L3120 1897V1885" stroke="#3fa85b" stroke-width="3" fill="none" />
              {#each mapLabels as l}
                <text x={l.x} y={l.y} font-size={l.s} font-weight={l.b} fill={l.c} textLength={l.w} lengthAdjust="spacingAndGlyphs" transform="rotate({l.r} {l.x} {l.y})" class="halo">{l.t}</text>
              {/each}
              {#each poi as [x, y, c, k]}
                <g transform="translate({x} {y})">
                  <path d="M0 54C-5 32-28 22-28 0a28 28 0 0 1 56 0C28 22 5 32 0 54z" fill={c} stroke="#fff" stroke-width="3" />
                  {#if k === 'dot'}<circle r="11" fill="#fff" />
                  {:else if k === 'bank'}<path d="M-16-6L0-15 16-6v3h-32zM-12-1h5v11h-5zM-2.500-1h5v11h-5zM7-1h5v11H7zM-16 11h32v4h-32z" fill="#fff" />
                  {:else if k === 'star'}<path d="M-18-12L-6-9-3-14 4-9 8-18 10-10 18-11 12 2 15 17H-15L-12 2z" fill="#fff" />
                  {:else if k === 'car'}<path d="M-13 0l4-9H9l4 9v14H8v-4H-8v4h-5zM-9 0H9M-13-17a4 4 0 0 1 7-1h14v4h-14a4 4 0 0 1-7-3z" fill="#fff" /><circle cx="-7" cy="4" r="2.500" fill={c} /><circle cx="7" cy="4" r="2.500" fill={c} />
                  {:else if k === 'cap'}<path d="M-20-5L0-16 20-5V9H17V-3L0 6zM-12 3L0 9 12 3V9L0 16-12 9z" fill="#fff" />
                  {:else}<text y="13" text-anchor="middle" font-size="38" font-weight="700" fill="#fff">{k}</text>{/if}
                </g>
              {/each}
              <circle cx="2700" cy="1530" r="14" fill="#fff" stroke="#1ba5a5" stroke-width="6" /><path d="M2681 1530h37" stroke="#2b2f86" stroke-width="6" />
              <circle cx="2806" cy="1216" r="27" fill="#fff" opacity=".85" /><circle cx="2806" cy="1216" r="22" fill="#4285f4" />
              <text x="2260" y="2111" font-size="60" textLength="185" lengthAdjust="spacingAndGlyphs" class="glogo"><tspan fill="#4285f4">G</tspan><tspan fill="#ea4335">o</tspan><tspan fill="#fbbc05">o</tspan><tspan fill="#4285f4">g</tspan><tspan fill="#34a853">l</tspan><tspan fill="#ea4335">e</tspan></text>
              <rect x="2896" y="2092" width="470" height="41" fill="#f5f5f5" opacity=".8" />
              <text x="2910" y="2121" font-size="31" textLength="225" fill="#333" lengthAdjust="spacingAndGlyphs">Map data ©2020</text><text x="3171" y="2121" font-size="31" textLength="177" fill="#333" lengthAdjust="spacingAndGlyphs">Terms of Use</text>
            </svg>
            <div class="searchbox"><span>Search</span><svg width="25" height="25" viewBox="0 0 24 24"><path d={P.search} fill="#aaa" /></svg></div>
            <div class="zoomer"><svg width="20" height="41" viewBox="0 0 20 41"><path d="M5 10h10M10 5v10M5 31h10" stroke="#666" stroke-width="2" /><path d="M3 20.500h14" stroke="#e6e6e6" /></svg></div>
          </div>
          <div class="saved"><p>Saved points</p><div class="list">Points that you save shall appear here</div></div>
        </div>
        <div class="actions"><button>IMPORT GPX/KML</button><button class="off">SET LOCATION</button></div>
      </div>
    </div>
  </section>

  <section class="toolbar">
    <div class="winbtn"><svg width="65" height="17" viewBox="411 0 65 17"><path d="M425.500 4.500h7M454 1l6 6.500M460 1l-6 6.500" stroke="#7890a0" stroke-width="1.300" fill="none" /></svg></div>
    {#each tools as t}
      <div class="tool"><svg width="25" height="25" viewBox="0 0 24 24">
        {#if t.f}<path d={t.f} fill="#607d8b" />{/if}
        {#if t.s}<path d={t.s} fill="none" stroke="#607d8b" stroke-width="1.500" />{/if}
        {#if t.b}<path d={t.b} fill="none" stroke="#607d8b" stroke-width="3" />{/if}
      </svg></div>
    {/each}
  </section>
</main>

<style>
  :global(body) { margin: 0; overflow: hidden; }
  main { position: relative; width: 1507px; height: 831px; overflow: hidden; background: #2b2b2b; font-family: Roboto, sans-serif; }
  p { margin: 0; }
  button { font-family: Roboto, sans-serif; border: 0; padding: 0; }
  svg { display: block; flex: none; }
  .ide { display: flex; flex-direction: column; height: 831px; font-family: 'Noto Sans', sans-serif; }
  .tabstrip { height: 24px; width: 410px; background: #3c3f41; color: #bbb; display: flex; justify-content: space-between; font-size: 14px; line-height: 17px; }
  .code { flex: 1; position: relative; width: 410px; }
  .code i { position: absolute; left: 402px; margin-top: -24px; color: #629755; font: italic 14px 'DejaVu Sans Mono', monospace; }
  .code b { position: absolute; left: 404px; top: 180px; font-weight: 400; color: #b4cfe5; }
  .code em { position: absolute; left: 403px; top: 252px; font-style: normal; color: #c0a070; }
  .hint { height: 17px; padding-left: 402px; display: flex; gap: 3px; font-size: 14.500px; line-height: 19px; color: #787878; }
  .hint span { background: #323232; border-radius: 4px; padding: 0 3px 0 6px; height: 19px; }
  .hint u { text-decoration: none; color: #cc7832; }
  .hscroll { height: 10px; width: 681px; background: #4d4d4d; margin-bottom: 1px; }
  .foot { height: 25px; display: flex; background: #2b2b2b; }
  .panel { width: 1012px; background: #313335; border-right: 1px solid #252525; }
  .vtab { margin-left: 77px; margin-top: -8px; width: 29px; background: #3c3f41; color: #bbb; overflow: hidden; }
  .vtab span { writing-mode: vertical-rl; font-size: 12px; line-height: 22px; }
  .log { display: flex; flex-direction: column; margin-top: -19px; color: #bbb; font: 14.100px/25px 'DejaVu Sans Mono', monospace; white-space: nowrap; }
  .log span:first-child { padding-left: 6px; }
  .edge { position: absolute; left: 1499px; top: 0; width: 8px; height: 725px; overflow: hidden; background: linear-gradient(#444 0 7px, #777 7px 11px, #204088 11px 77px, #6b6b6b 77px 115px, #191b1c 115px 150px, #fff 150px 241px, #000 241px 243px, #fff 243px 395px, #000 395px 397px, #fff 397px 621px, #000 621px 623px, #fff 623px 706px, #bbb 706px 725px); }
  .edge span { position: absolute; left: -4px; font: 13px/15px 'Liberation Serif', serif; white-space: nowrap; }
  .edge strong { position: absolute; top: 125px; left: 0; font: 14px/18px 'Noto Sans', sans-serif; color: #aaa; }
  .alert { position: absolute; left: 1237px; top: 791px; width: 270px; height: 40px; box-sizing: border-box; padding: 9px 0 0 14px; background: #5a3b3f; display: flex; align-items: center; gap: 10px; color: #c3bcbd; font: bold 14.500px 'Noto Sans', sans-serif; }
  .alert span { letter-spacing: -0.27px; margin-top: -2px; }

  .phone { position: absolute; left: 3px; top: -23px; width: 399px; height: 877px; border-radius: 55px; background: #090909; box-shadow: inset 0 0 0 1px #161616, inset 0 0 0 3px #060606, inset 0 0 0 4px #3b3b3b, inset 0 0 0 5.500px #4b4b4b, inset 0 0 0 7px #111, inset 0 0 0 9px #6e6e6e, inset 0 0 0 10px #2b2b2b, inset 0 0 0 11px #000; display: flex; flex-direction: column; }
  .screen { margin-left: 14px; width: 370px; height: 740px; border-radius: 20px; overflow: hidden; background: #222; display: flex; flex-direction: column; }
  .status { height: 22px; background: #3700b3; display: flex; align-items: center; padding-left: 13px; color: #fff; font-size: 13.800px; }
  .status b { font-weight: 500; width: 36px; letter-spacing: -0.2px; }
  .status .sd { margin-left: 9px; }
  .status .right { margin-left: auto; margin-right: 9px; }
  header { height: 53px; box-sizing: border-box; padding: 0 0 0 15px; line-height: 54px; background: #6200ee; color: #fff; font-size: 19px; font-weight: 500; letter-spacing: -0.05px; }
  .app { height: 619px; color: #d0d0d0; font-size: 13.400px; display: flex; flex-direction: column; }
  .title { padding: 5px 0 0 8.500px; line-height: 17px; height: 44px; box-sizing: content-box; }
  .title { height: 44px; }
  .finder { display: flex; padding-left: 5px; height: 77px; }
  .finder svg { margin-top: 18px; }
  .finder span { padding: 20px 0 0 5px; line-height: 16px; width: 155px; }
  .finder span, .coords, .title { white-space: nowrap; }
  .finder button { margin-top: 16px; width: 185px; height: 54px; background: #ff8a00; color: #24190c; font-size: 12.900px; font-weight: 500; }
  .halo { paint-order: stroke; stroke: #fff; stroke-width: 7px; stroke-linejoin: round; stroke-opacity: 0.9; }
  .cream { stroke: #f4eddf; stroke-width: 5px; }
  .mapbox { font-family: Lato, sans-serif; paint-order: stroke; stroke: #918c82; stroke-width: 5px; fill: #fff; }
  .pair { display: flex; justify-content: space-between; padding: 11px 6px 0 8px; }
  .pair button { width: 162px; height: 35px; background: #ff8a00; color: #24190c; font-size: 13px; font-weight: 500; }
  .coords { display: flex; margin: 16px 0 0 15px; gap: 17px; height: 19px; overflow: hidden; line-height: 15px; font-size: 13.400px; }
  nav { height: 46px; background: #000; }
  .speaker { margin: 24px 0 0 152px; width: 93px; height: 9px; border-radius: 5px; background: repeating-linear-gradient(90deg, #262626 0 1px, #141414 1px 2px); }

  .window { position: absolute; left: 475px; top: 0; width: 1024px; height: 799px; background: #efefef; display: flex; flex-direction: column; box-shadow: 1px 1px 0 #444, 0 0 10px rgba(0, 0, 0, 0.6); }
  .caption { height: 24px; background: #fff; display: flex; padding-left: 10px; color: #8c8c8c; font: 14.500px/14px 'Noto Sans', sans-serif; }
  .caption span { margin: -2px 0 0 5px; letter-spacing: -0.22px; white-space: nowrap; }
  .caption .close { margin-left: auto; margin-right: 13.500px; }
  .body { display: flex; height: 775px; }
  aside { width: 242px; background: #fff; padding-top: 12px; box-sizing: border-box; }
  .item { height: 45px; display: flex; align-items: center; padding-left: 16px; gap: 12px; }
  .item.on { background: #f4f4f4; }
  .item.split { border-top: 3px solid #f4f4f4; }
  .lbl text { fill: #90a4ae; }
  .lbl { margin-top: 1px; }
  .content { width: 782px; padding: 24px 22px 0 13px; box-sizing: border-box; }
  .tabs { display: flex; gap: 8px; font-size: 13px; line-height: 18px; color: #757575; height: 51px; letter-spacing: -0.13px; }
  .tabs span { height: 24px; }
  .tabs .on { color: #222; border-bottom: 2px solid #00bfa5; }
  .cols { display: flex; gap: 15px; padding-left: 17px; }
  .mapbox-area { position: relative; width: 375px; height: 612px; }
  .rd { fill: none; stroke-linejoin: round; stroke-linecap: round; }
  .glogo { font-family: Lato, sans-serif; font-weight: 700; paint-order: stroke; stroke: #fff; stroke-width: 5px; }
  .searchbox { position: absolute; left: 10px; top: 12px; width: 356px; height: 38px; box-sizing: border-box; padding: 0 9px 0 13px; background: #fff; border-radius: 2px; box-shadow: 0 2px 5px rgba(0, 0, 0, 0.35); display: flex; align-items: center; justify-content: space-between; font-size: 15px; font-weight: 300; color: #666; }
  .zoomer { position: absolute; left: 350px; top: 552px; width: 20px; height: 41px; background: #fff; border-radius: 1px; box-shadow: 0 1px 2px rgba(0, 0, 0, 0.3); }
  .saved { width: 340px; font-size: 13px; display: flex; flex-direction: column; }
  .saved p { color: #757575; line-height: 16px; padding-top: 3px; height: 19px; }
  .list { height: 590px; box-sizing: border-box; border: 1px solid #ccc; display: flex; align-items: center; justify-content: center; color: #222; letter-spacing: -0.03px; }
  .actions { display: flex; justify-content: space-between; padding: 13px 0 0 17px; }
  .actions button { width: 165px; height: 45px; border-radius: 2px; background: #fafafa; box-shadow: 0 1px 2px rgba(0, 0, 0, 0.3); font-size: 12.800px; font-weight: 500; color: #616161; }
  .actions .off { color: #bdbdbd; }

  .toolbar { position: absolute; left: 410px; top: -1px; width: 67px; height: 518px; box-sizing: border-box; border: 1px solid #000; background: #efefef; }
  .winbtn { height: 16.500px; }
  .tool { height: 45px; display: flex; align-items: center; justify-content: center; padding-right: 1px; }
</style>
